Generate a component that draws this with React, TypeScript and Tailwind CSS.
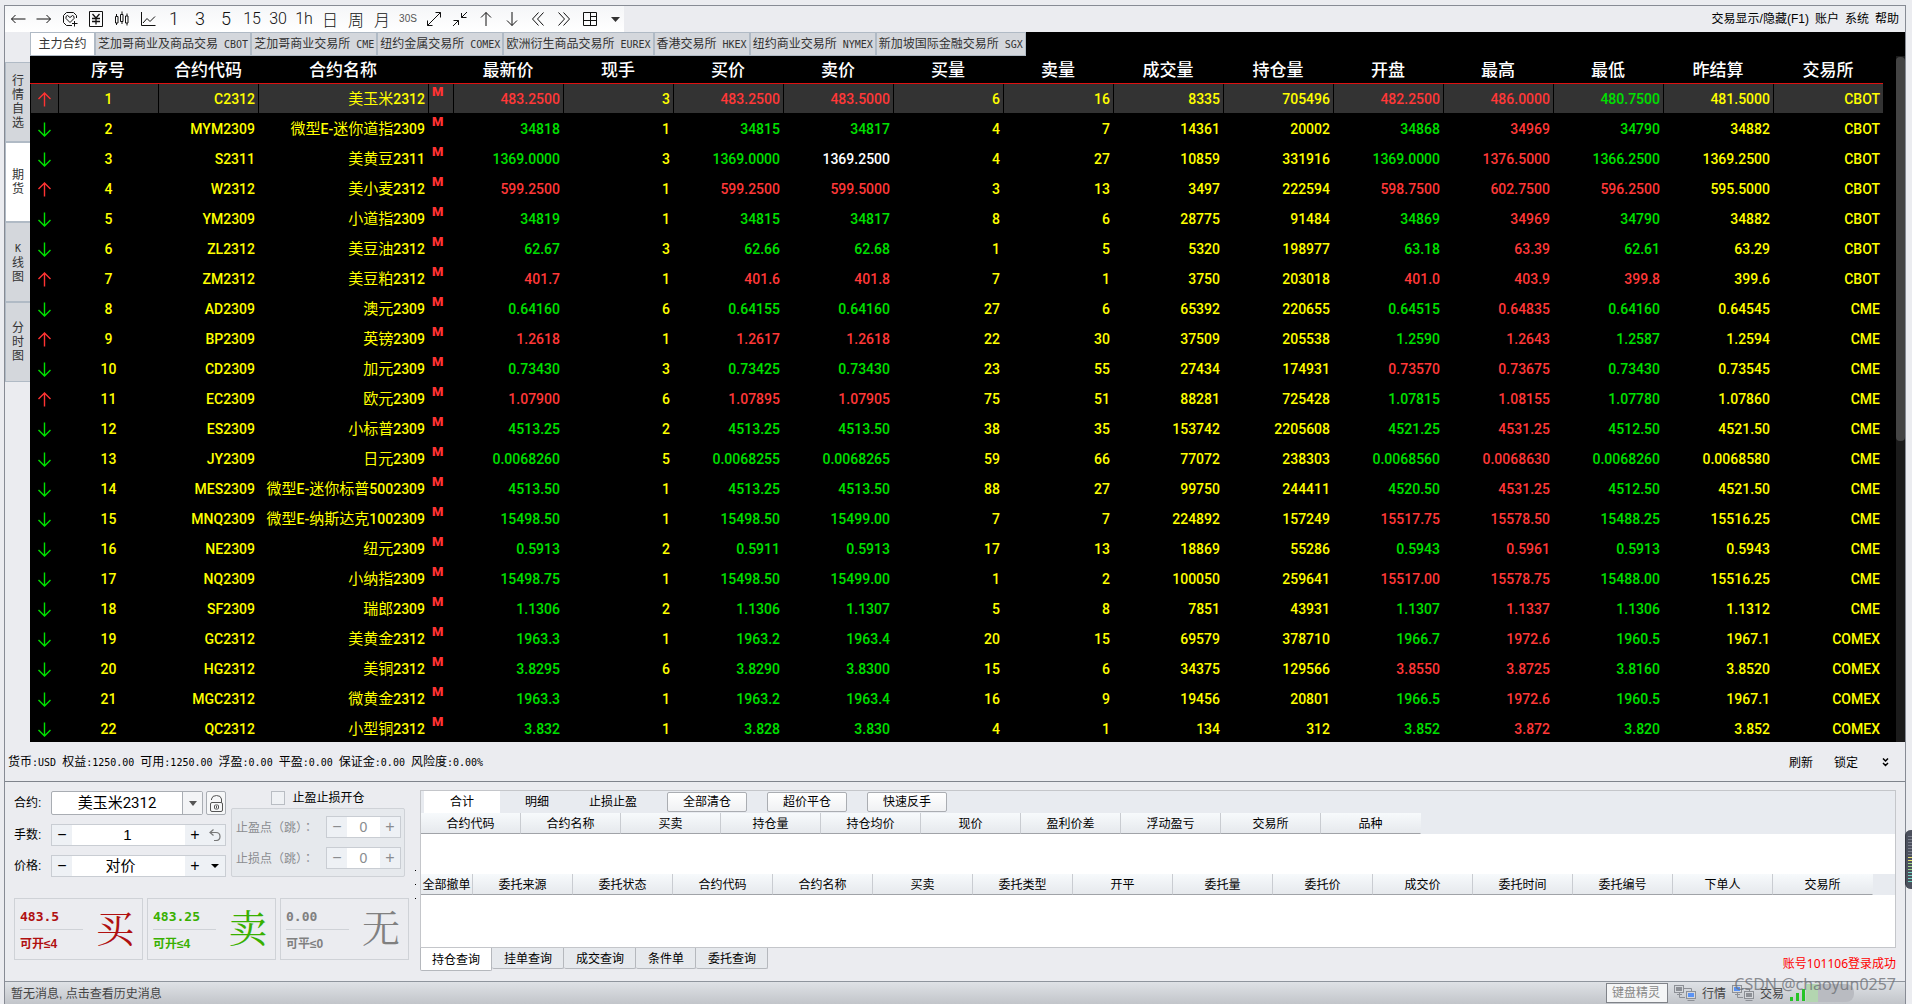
import React from "react";

const CJK = 'font-["Liberation_Sans","Noto_Sans_CJK_SC",sans-serif]';

const tabs = [
  "芝加哥商业及商品交易 CBOT",
  "芝加哥商业交易所 CME",
  "纽约金属交易所 COMEX",
  "欧洲衍生商品交易所 EUREX",
  "香港交易所 HKEX",
  "纽约商业交易所 NYMEX",
  "新加坡国际金融交易所 SGX",
];

const columns = [
  "最新价", "现手", "买价", "卖价", "买量", "卖量", "成交量", "持仓量", "开盘", "最高", "最低", "昨结算", "交易所",
];

// direction | code | name | last hand bid ask bidVol askVol volume openInt open high low settle exchange | tones
const quotes = `
u|C2312|美玉米2312|483.2500 3 483.2500 483.5000 6 16 8335 705496 482.2500 486.0000 480.7500 481.5000 CBOT|ryrryyyyrrgyy
d|MYM2309|微型E-迷你道指2309|34818 1 34815 34817 4 7 14361 20002 34868 34969 34790 34882 CBOT|gyggyyyygrgyy
d|S2311|美黄豆2311|1369.0000 3 1369.0000 1369.2500 4 27 10859 331916 1369.0000 1376.5000 1366.2500 1369.2500 CBOT|gygwyyyygrgyy
u|W2312|美小麦2312|599.2500 1 599.2500 599.5000 3 13 3497 222594 598.7500 602.7500 596.2500 595.5000 CBOT|ryrryyyyrrryy
d|YM2309|小道指2309|34819 1 34815 34817 8 6 28775 91484 34869 34969 34790 34882 CBOT|gyggyyyygrgyy
d|ZL2312|美豆油2312|62.67 3 62.66 62.68 1 5 5320 198977 63.18 63.39 62.61 63.29 CBOT|gyggyyyygrgyy
u|ZM2312|美豆粕2312|401.7 1 401.6 401.8 7 1 3750 203018 401.0 403.9 399.8 399.6 CBOT|ryrryyyyrrryy
d|AD2309|澳元2309|0.64160 6 0.64155 0.64160 27 6 65392 220655 0.64515 0.64835 0.64160 0.64545 CME|gyggyyyygrgyy
u|BP2309|英镑2309|1.2618 1 1.2617 1.2618 22 30 37509 205538 1.2590 1.2643 1.2587 1.2594 CME|ryrryyyygrgyy
d|CD2309|加元2309|0.73430 3 0.73425 0.73430 23 55 27434 174931 0.73570 0.73675 0.73430 0.73545 CME|gyggyyyyrrgyy
u|EC2309|欧元2309|1.07900 6 1.07895 1.07905 75 51 88281 725428 1.07815 1.08155 1.07780 1.07860 CME|ryrryyyygrgyy
d|ES2309|小标普2309|4513.25 2 4513.25 4513.50 38 35 153742 2205608 4521.25 4531.25 4512.50 4521.50 CME|gyggyyyygrgyy
d|JY2309|日元2309|0.0068260 5 0.0068255 0.0068265 59 66 77072 238303 0.0068560 0.0068630 0.0068260 0.0068580 CME|gyggyyyygrgyy
d|MES2309|微型E-迷你标普5002309|4513.50 1 4513.25 4513.50 88 27 99750 244411 4520.50 4531.25 4512.50 4521.50 CME|gyggyyyygrgyy
d|MNQ2309|微型E-纳斯达克1002309|15498.50 1 15498.50 15499.00 7 7 224892 157249 15517.75 15578.50 15488.25 15516.25 CME|gyggyyyyrrgyy
d|NE2309|纽元2309|0.5913 2 0.5911 0.5913 17 13 18869 55286 0.5943 0.5961 0.5913 0.5943 CME|gyggyyyygrgyy
d|NQ2309|小纳指2309|15498.75 1 15498.50 15499.00 1 2 100050 259641 15517.00 15578.75 15488.00 15516.25 CME|gyggyyyyrrgyy
d|SF2309|瑞郎2309|1.1306 2 1.1306 1.1307 5 8 7851 43931 1.1307 1.1337 1.1306 1.1312 CME|gyggyyyygrgyy
d|GC2312|美黄金2312|1963.3 1 1963.2 1963.4 20 15 69579 378710 1966.7 1972.6 1960.5 1967.1 COMEX|gyggyyyygrgyy
d|HG2312|美铜2312|3.8295 6 3.8290 3.8300 15 6 34375 129566 3.8550 3.8725 3.8160 3.8520 COMEX|gyggyyyyrrgyy
d|MGC2312|微黄金2312|1963.3 1 1963.2 1963.4 16 9 19456 20801 1966.5 1972.6 1960.5 1967.1 COMEX|gyggyyyygrgyy
d|QC2312|小型铜2312|3.832 1 3.828 3.830 4 1 134 312 3.852 3.872 3.820 3.852 COMEX|gyggyyyygrgyy
`
  .trim()
  .split("\n")
  .map((line) => {
    const [dir, code, name, values, tones] = line.split("|");
    return { dir, code, name, values: values.split(" "), tones };
  });

const toneClass: Record<string, string> = {
  r: "text-[#ff3838]",
  g: "text-[#00e000]",
  y: "text-[#ffff00]",
  w: "text-white",
};

const positionCols = ["合约代码", "合约名称", "买卖", "持仓量", "持仓均价", "现价", "盈利价差", "浮动盈亏", "交易所", "品种"];
const orderCols = [
  "委托来源", "委托状态", "合约代码", "合约名称", "买卖", "委托类型", "开平", "委托量", "委托价", "成交价", "委托时间", "委托编号", "下单人", "交易所",
];

/** Chinese text whose Latin runs are set in their own face and size. */
function Mixed({ text, latin }: { text: string; latin: string }) {
  return (
    <>
      {text.split(/([\x20-\x7e]+)/).map((part, i) =>
        i % 2 ? (
          <span key={i} className={latin}>{part}</span>
        ) : (
          part
        ),
      )}
    </>
  );
}

const MONO = 'font-["DejaVu_Sans_Mono",monospace] text-[10px] whitespace-pre';

function Icon({ children, w = 16 }: { children: React.ReactNode; w?: number }) {
  return (
    <svg width={w} height="16" viewBox={`0 0 ${w} 16`} fill="none" stroke="#111" strokeWidth="1" aria-hidden="true">
      {children}
    </svg>
  );
}

const DIGIT = 'font-["Roboto",sans-serif] text-[18px] font-light';
const PAIR = 'font-["Roboto",sans-serif] text-[16px] font-light';
const HAN = 'font-["Noto_Sans_CJK_SC",sans-serif] text-[16px] font-light';

const tools: { label: string; node: React.ReactNode }[] = [
  { label: "后退", node: <Icon><path d="M1.5 8H15.5M5.5 4L1.5 8L5.5 12" /></Icon> },
  { label: "前进", node: <Icon><path d="M.5 8H14.5M10.5 4L14.5 8L10.5 12" /></Icon> },
  {
    label: "自选",
    node: (
      <Icon>
        <path d="M14.5 7V4.5L11.500 1.500H4.500L1.500 4.500V11.500L4.500 14.500H10" />
        <path d="M8 11.500L4 7.500V5.500L5.500 4.500L8 6.500L10.500 4.500L12 5.500V7.500L8 11.500M10 12.500H15.500M12.500 10V15.500" />
      </Icon>
    ),
  },
  {
    label: "资金",
    node: (
      <Icon>
        <path d="M1.500 .500H14.500V15.500H1.500Z" />
        <path d="M4.500 3L8 7L11.500 3M4 7.500H12M4 10.500H12M8 7V13.500" strokeWidth="1.3" />
      </Icon>
    ),
  },
  {
    label: "蜡烛图",
    node: (
      <Icon>
        <path d="M2.500 3V5.500M2.500 12V14M1.500 5.500H4V12H1.500ZM8 .500V3.500M8 10.500V13M6.500 3.500H9V10.500H6.500ZM13 2.500V5M13 12V14.500M11.500 5H14V12H11.500Z" />
      </Icon>
    ),
  },
  { label: "分时", node: <Icon><path d="M1.500 1V14.500H15.500M3 12L7 7.500L10 10.500L15 5.500" /></Icon> },
  { label: "1分", node: <span className={DIGIT}>1</span> },
  { label: "3分", node: <span className={DIGIT}>3</span> },
  { label: "5分", node: <span className={DIGIT}>5</span> },
  { label: "15分", node: <span className={PAIR}>15</span> },
  { label: "30分", node: <span className={PAIR}>30</span> },
  { label: "1小时", node: <span className={PAIR}>1h</span> },
  { label: "日线", node: <span className={HAN}>日</span> },
  { label: "周线", node: <span className={HAN}>周</span> },
  { label: "月线", node: <span className={HAN}>月</span> },
  { label: "30秒", node: <span className={'font-["Liberation_Sans",sans-serif] text-[10px] text-[#555]'}>30S</span> },
  { label: "放大", node: <Icon><path d="M1.500 14.500L14.500 1.500M9.500 1.500H14.500V6.500M1.500 9.500V14.500H6.500" /></Icon> },
  { label: "缩小", node: <Icon><path d="M15 1L9.500 6.500M9.500 2V6.500H14.500M1 15L6.500 9.500M1.500 9.500H6.500V14" /></Icon> },
  { label: "上移", node: <Icon><path d="M8 15V1.500M3 6.500L8 1.500L13 6.500" /></Icon> },
  { label: "下移", node: <Icon><path d="M8 1V14.500M3 9.500L8 14.500L13 9.500" /></Icon> },
  { label: "左移", node: <Icon><path d="M8.500 1.500L2.500 8L8.500 14.500M13.500 1.500L7.500 8L13.500 14.500" /></Icon> },
  { label: "右移", node: <Icon><path d="M2.500 1.500L8.500 8L2.500 14.500M7.500 1.500L13.500 8L7.500 14.500" /></Icon> },
  { label: "布局", node: <Icon><path d="M1.500 1.500H14.500V14.500H1.500ZM8.500 1.500V14.500M1.500 9.500H14.500M8.500 5.500H14.500" /></Icon> },
];

function Toolbar() {
  return (
    <header className="flex h-[26px] shrink-0 items-stretch justify-between">
      <div className="flex items-center bg-gradient-to-b from-[#f5f6f8] to-white">
        {tools.map((t) => (
          <button key={t.label} aria-label={t.label} className="flex h-[26px] w-[26px] items-center justify-center leading-none text-[#111]">
            {t.node}
          </button>
        ))}
        <button aria-label="更多" className="flex h-[26px] w-[21px] items-center justify-start pl-2">
          <svg width="9" height="5" viewBox="0 0 9 5" aria-hidden="true"><path d="M0 0H9L4.500 5Z" fill="#333" /></svg>
        </button>
      </div>
      <nav className="flex items-center gap-1.5 pr-1.5 text-xs leading-4 text-black">
        <button>交易显示/隐藏(F1)</button>
        <button>账户</button>
        <button>系统</button>
        <button>帮助</button>
      </nav>
    </header>
  );
}

function SideTabs() {
  const items = [["行情自选", false], ["期货", true], ["K线图", false], ["分时图", false]] as const;
  return (
    <nav className="flex w-[25px] shrink-0 flex-col pt-[30px]">
      {items.map(([label, active]) => (
        <button
          key={label}
          className={`flex h-20 flex-col items-center justify-center border-y border-l border-[#b0bac5] text-xs leading-[14px] text-[#333] ${active ? "bg-white" : "bg-[#d4d7dc]"}`}
        >
          {label.split("").map((c) => <span key={c}><Mixed text={c} latin={MONO} /></span>)}
        </button>
      ))}
    </nav>
  );
}

function Arrow({ up }: { up: boolean }) {
  return (
    <svg className="mx-auto mt-0.5 block" width="13" height="15" viewBox="0 0 13 15" fill="none" strokeWidth="1.4" stroke={up ? "#ff3333" : "#00e000"} role="img" aria-label={up ? "涨" : "跌"}>
      <path d={up ? "M6.500 14.500V1M.500 7L6.500 1L12.500 7" : "M6.500 .500V14M.500 8L6.500 14L12.500 8"} />
    </svg>
  );
}

function QuoteTable() {
  return (
    <table className='w-full table-fixed border-separate border-spacing-0 font-["Roboto","Noto_Sans_CJK_SC",sans-serif] text-sm leading-4'>
      <colgroup>
        <col className="w-[28px]" />
        <col className="w-[100px]" />
        <col className="w-[100px]" />
        <col className="w-[170px]" />
        <col className="w-[25px]" />
        {columns.map((c) => <col key={c} />)}
      </colgroup>
      <thead>
        <tr className="h-7 text-[17px] text-white">
          {["", "序号", "合约代码", "合约名称", "", ...columns].map((c, i) => (
            <th key={i} className="border-b border-[#e01010] p-0 font-medium">{c}</th>
          ))}
        </tr>
      </thead>
      <tbody>
        {quotes.map((q, i) => {
          const cell = `border-b border-l border-black p-0 ${i === 0 ? "bg-[#333333]" : ""}`;
          return (
            <tr key={q.code} className="h-[30px]">
              <td className={cell}><Arrow up={q.dir === "u"} /></td>
              <td className={`${cell} text-center font-medium text-[#ffff00]`}>{i + 1}</td>
              <td className={`${cell} pr-[3px] text-right font-medium text-[#ffff00]`}>{q.code}</td>
              <td className={`${cell} pr-[3px] text-right text-[15px] whitespace-nowrap text-[#ffff00]`}>
                <Mixed text={q.name} latin="text-sm font-medium" />
              </td>
              <td className={`${cell} pl-[3px] align-top text-[13px] font-black text-[#ff3333]`}>M</td>
              {q.values.map((v, k) => (
                <td key={k} className={`${cell} pr-[3px] text-right font-medium ${toneClass[q.tones[k]]}`}>{v}</td>
              ))}
            </tr>
          );
        })}
      </tbody>
    </table>
  );
}

function Market() {
  return (
    <main className="flex min-h-0 min-w-0 flex-1 flex-col bg-black">
      <div className="flex h-6 shrink-0 text-xs leading-4 text-[#333]">
        <button className="w-[65px] border border-[#b0bac5] bg-white">主力合约</button>
        {tabs.map((t) => (
          <button key={t} className="border border-[#b0bac5] bg-[#d4d7dc] px-0.5 whitespace-nowrap">
            <Mixed text={t} latin={MONO} />
          </button>
        ))}
      </div>
      <div className="flex min-h-0 flex-1">
        <div className="min-w-0 flex-1 overflow-hidden"><QuoteTable /></div>
        <div className="ml-[13px] w-[9px] bg-[#1b1b1b]">
          <div className="mt-px h-[56%] rounded bg-[#444]" />
        </div>
      </div>
    </main>
  );
}

const spinBtn = "flex h-full w-5 items-center justify-center bg-[#eef1f5] text-base leading-none";

function SpinRow({ id, label, value, shift = "", children }: { id: string; label: string; value: string; shift?: string; children: React.ReactNode }) {
  return (
    <div className="flex items-center">
      <label htmlFor={id} className="w-[37px]">{label}</label>
      <div className="flex h-[22px] w-[175px] border border-[#c9cdd3] bg-[#eef1f5]">
        <button aria-label={`${label}减`} className={spinBtn}>−</button>
        <input id={id} defaultValue={value} className={`min-w-0 flex-1 bg-white text-center text-[15px] outline-none ${shift}`} />
        <button aria-label={`${label}加`} className={spinBtn}>+</button>
        <button aria-label={`${label}选项`} className="flex w-5 items-center justify-center">{children}</button>
      </div>
    </div>
  );
}

function StopRow({ id, label }: { id: string; label: string }) {
  return (
    <div className="flex items-center justify-between text-[#8a8c90]">
      <label htmlFor={id} className='font-["Noto_Sans_CJK_TC",sans-serif]'>{label}</label>
      <div className="flex h-[22px] w-[75px] border border-[#c9cdd3]">
        <button disabled aria-label={`${label}减`} className={spinBtn}>−</button>
        <input id={id} disabled defaultValue="0" className='min-w-0 flex-1 bg-white text-center text-sm' />
        <button disabled aria-label={`${label}加`} className={spinBtn}>+</button>
      </div>
    </div>
  );
}

function OrderCard({ price, limit, action, tone }: { price: string; limit: string; action: string; tone: string }) {
  return (
    <button className={`flex h-[62px] w-[129px] items-center justify-between border border-[#cfd2d7] pr-2 pl-[5px] text-left ${tone}`}>
      <span className="flex w-[63px] flex-col">
        <span className='border-b border-[#cfd2d7] pt-0.5 pb-1 font-["DejaVu_Sans_Mono",monospace] text-[13px] leading-4 font-bold'>{price}</span>
        <span className="pt-1.5 text-xs leading-4 font-bold">{limit}</span>
      </span>
      <span className='font-["Liberation_Serif","Noto_Serif_CJK_SC","Noto_Sans_CJK_SC",serif] text-[38px] leading-none font-normal'>{action}</span>
    </button>
  );
}

function TradeForm() {
  return (
    <section className="flex w-[415px] shrink-0 flex-col">
      <div className="flex gap-[5px] pt-[9px] pl-[9px]">
        <div className="flex flex-col gap-[9px]">
          <div className="flex items-center">
            <label htmlFor="contract" className="w-[37px]">合约:</label>
            <div className="relative flex h-6 w-[152px]">
              <select id="contract" className='w-full appearance-none rounded-xs border border-[#a9adb3] bg-white pr-5 text-center font-["Roboto","Noto_Sans_CJK_SC",sans-serif] text-[15px] leading-5 [text-align-last:center]'>
                <option>美玉米2312</option>
              </select>
              <span className="pointer-events-none absolute inset-y-px right-px flex w-5 items-center justify-center border-l border-[#a9adb3] bg-[#f3f4f6]">
                <svg width="8" height="5" viewBox="0 0 8 5" aria-hidden="true"><path d="M0 0H8L4 5Z" fill="#555" /></svg>
              </span>
            </div>
            <button aria-label="锁定合约" className="ml-[3px] flex h-6 w-5 items-center justify-center rounded-xs border border-[#a9adb3] bg-[#f6f7f8]">
              <svg width="13" height="17" viewBox="0 0 13 17" fill="none" stroke="#555" aria-hidden="true">
                <rect x=".5" y="7.500" width="12" height="9" rx="1.500" />
                <path d="M1.500 5V4Q2 .500 6.500 .500T11.500 4V7.500" />
                <rect x="4.500" y="10" width="4" height="4" rx="1" />
                <path d="M6.500 11V13" />
              </svg>
            </button>
          </div>
          <SpinRow id="lots" label="手数:" value="1" shift="pr-0.5">
            <svg width="12" height="12" viewBox="0 0 12 12" fill="none" stroke="#777" strokeWidth="1.200" aria-hidden="true">
              <path d="M4.500 .500L1 3.500L4.500 6.500M1 3.500H7Q11 3.500 11 7.500T7 11.500H5" />
            </svg>
          </SpinRow>
          <SpinRow id="price" label="价格:" value="对价" shift="pr-4">
            <svg width="8" height="4" viewBox="0 0 8 4" aria-hidden="true"><path d="M0 0H8L4 4Z" fill="#000" /></svg>
          </SpinRow>
        </div>
        <div className="flex w-[174px] flex-col">
          <label className="-mt-1 flex h-[21px] items-center justify-center gap-[7px]">
            <input type="checkbox" className="h-3.5 w-3.5 appearance-none border border-[#b9bdc3] bg-[#eff1f4]" />
            止盈止损开仓
          </label>
          <fieldset className="flex flex-1 flex-col justify-between rounded-xs border border-[#cfd2d7] bg-[#e6e9ed] py-[7px] pr-[3px] pl-1">
            <StopRow id="takeProfit" label="止盈点（跳）：" />
            <StopRow id="stopLoss" label="止损点（跳）：" />
          </fieldset>
        </div>
      </div>
      <div className="mt-[21px] flex gap-1 pl-[9px]">
        <OrderCard price="483.5" limit="可开≤4" action="买" tone="text-[#b01010]" />
        <OrderCard price="483.25" limit="可开≤4" action="卖" tone="text-[#38b000]" />
        <OrderCard price="0.00" limit="可平≤0" action="无" tone="text-[#808080]" />
      </div>
    </section>
  );
}

const headCell =
  "h-[21px] border-b border-b-[#a0a3a8] border-r border-r-[#c9ccd1] bg-gradient-to-b from-[#f7fafc] to-[#e6e9ed] p-0 pt-0.5 leading-[18px] font-normal last:border-r-transparent";

function Positions() {
  return (
    <section className="flex min-w-0 flex-1 flex-col pt-2 pr-[9px]">
      <div className="border border-[#c4c6ca] bg-[#e8ebf0]">
        <div className="flex h-[22px] items-center pl-[3px]">
          <button className="h-full w-[76px] bg-white">合计</button>
          <button className="w-[74px]">明细</button>
          <button className="w-[78px]">止损止盈</button>
          <span className="flex gap-5 pl-[15px]">
            {["全部清仓", "超价平仓", "快速反手"].map((b) => (
              <button key={b} className="h-5 w-20 rounded-xs border border-[#aaadb2] bg-gradient-to-b from-white to-[#f0f1f3] leading-4">{b}</button>
            ))}
          </span>
        </div>
        <table className="table-fixed border-separate border-spacing-0">
          <thead>
            <tr>{positionCols.map((c) => <th key={c} className={`${headCell} w-[100px]`}>{c}</th>)}</tr>
          </thead>
        </table>
        <div className="h-10 bg-white" />
        <table className="table-fixed border-separate border-spacing-0">
          <thead>
            <tr>
              <th className={`${headCell} w-[52px]`}><button className="whitespace-nowrap">全部撤单</button></th>
              {orderCols.map((c) => <th key={c} className={`${headCell} w-[100px]`}>{c}</th>)}
            </tr>
          </thead>
        </table>
        <div className="h-[52px] bg-white" />
      </div>
      <div className="flex items-start justify-between">
        <div className="flex items-start">
          {["持仓查询", "挂单查询", "成交查询", "条件单", "委托查询"].map((t, i) => (
            <button
              key={t}
              className={`rounded-b-xs border-r border-b border-[#b5b8bd] ${i === 0 ? "h-[23px] border-l bg-white px-[11px] pt-0.5" : "h-[21px] bg-[#e6e9ed] pt-0.5 pr-[11px] pl-3"}`}
            >
              {t}
            </button>
          ))}
        </div>
        <p className='pt-2 font-["Noto_Sans","Noto_Sans_CJK_SC",sans-serif] leading-4 text-[#ff0000]'>账号101106登录成功</p>
      </div>
    </section>
  );
}

function LinkIcon({ left, right }: { left: string; right: string }) {
  return (
    <svg width="22" height="16" viewBox="0 0 22 16" fill="none" stroke="#8d9096" aria-hidden="true">
      <rect x=".5" y=".5" width="9" height="7" fill="#d5d8dc" />
      <rect x="2" y="2" width="6" height="4" fill={left} stroke="none" />
      <path d="M3 9.500H8M5.500 8V12.500H11M10 3.500H17.500V6" />
      <rect x="12.500" y="6.500" width="9" height="7" fill="#d5d8dc" />
      <rect x="14" y="8" width="6" height="4" fill={right} stroke="none" />
      <path d="M13.500 15.500H20.500" />
    </svg>
  );
}

function StatusBar() {
  return (
    <footer className="relative flex h-[23px] shrink-0 items-center justify-between border-t border-[#8f959d] bg-gradient-to-b from-[#dfe2e6] to-[#c2c5ca] pl-1.5 text-[#444]">
      <button className="pt-0.5">暂无消息, 点击查看历史消息</button>
      <div className="flex items-center pr-[51px]">
        <input aria-label="键盘精灵" placeholder="键盘精灵" className="mr-1.5 h-5 w-[62px] border border-[#808389] bg-[#f4f5f6] pl-[5px] text-xs placeholder:text-[#888]" />
        <LinkIcon left="#8d9096" right="#5b93f5" />
        <span className="mr-1.5 ml-1.5 pt-0.5">行情</span>
        <LinkIcon left="#5b93f5" right="#8d9096" />
        <span className="mr-1.5 ml-1.5 pt-0.5">交易</span>
        <svg width="16" height="16" viewBox="0 0 16 16" fill="#25c425" aria-hidden="true">
          <path d="M0 12H3V16H0ZM6 8H9V16H6ZM12 4H15V16H12Z" />
        </svg>
        <span className="h-[18px] w-3 bg-[#b3d5b0]" />
        <span className="h-[18px] w-9 rounded-r-lg bg-[#b9bbc1]" />
      </div>
      <p className='pointer-events-none absolute -top-2.5 right-[9px] font-["Noto_Sans",sans-serif] text-base leading-6 whitespace-nowrap text-[#6f7278]/80'>
        CSDN @chaoyun0257
      </p>
    </footer>
  );
}

export default function App() {
  return (
    <div className={`${CJK} relative flex h-screen flex-col overflow-hidden bg-[#ebecf0] pt-[5px] pr-1.5 pl-1 text-xs leading-4 text-black`}>
      <div className="flex min-h-0 flex-1 flex-col border-x border-t border-[#878b94]">
        <Toolbar />
        <div className="flex min-h-0 flex-1">
          <SideTabs />
          <Market />
        </div>
        <div className="flex h-10 shrink-0 items-center justify-between border-b border-[#7f848c] pt-0.5 pl-[3px]">
          <p><Mixed text="货币:USD 权益:1250.00 可用:1250.00 浮盈:0.00 平盈:0.00 保证金:0.00 风险度:0.00%" latin={MONO} /></p>
          <div className="flex items-center pr-4">
            <button className="mr-[21px]">刷新</button>
            <button className="mr-6">锁定</button>
            <button aria-label="收起">
              <svg width="7" height="9" viewBox="0 0 7 9" fill="none" stroke="#000" strokeWidth="1.500" aria-hidden="true"><path d="M1 .500L3.500 3L6 .500M1 5L3.500 7.500L6 5" /></svg>
            </button>
          </div>
        </div>
        <div className="relative flex h-[199px] shrink-0">
          <TradeForm />
          <div className="absolute top-[88px] left-[410px] flex flex-col gap-[13px]" aria-hidden="true">
            <i className="h-px w-px bg-black" />
            <i className="h-px w-px bg-black" />
            <i className="h-px w-px bg-black" />
          </div>
          <Positions />
        </div>
        <StatusBar />
      </div>
      <div className="absolute right-0 bottom-[115px] flex h-[59px] w-[7px] flex-col justify-center gap-px rounded-l-md border-l border-[#33363f] bg-[#4d515e] pl-0.5" aria-hidden="true">
        {Array.from({ length: 16 }, (_, i) => (
          <i key={i} className={`h-px w-full ${i < 7 ? "bg-[#7b7f8c]" : i < 9 ? "bg-[#e6e06a]" : i < 12 ? "bg-[#9bd68a]" : "bg-[#6fd3c0]"} mb-px`} />
        ))}
      </div>
    </div>
  );
}
